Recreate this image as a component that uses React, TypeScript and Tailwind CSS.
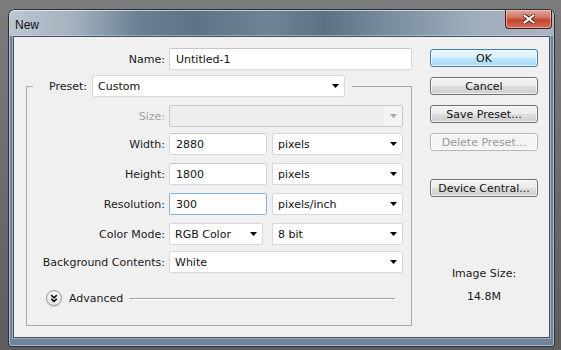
import React from "react";

function Arrow({ gray }: { gray?: boolean }) {
  return (
    <svg width="7" height="4" viewBox="0 0 7 4" className="ml-auto mr-[5px] shrink-0">
      <path d="M0 0h7L3.5 4z" fill={gray ? "#a8a8a8" : "#000"} />
    </svg>
  );
}

function Select({ className, children }: { className: string; children?: React.ReactNode }) {
  return (
    <div className={`flex h-[22px] items-center rounded-[2px] border border-[#d5d8dc] bg-white pl-[5px] text-[#111] ${className}`}>
      <span>{children}</span>
      <Arrow />
    </div>
  );
}

function Input({ className, children, focus }: { className: string; children?: React.ReactNode; focus?: boolean }) {
  return (
    <div
      className={`flex h-[22px] items-center rounded-[2px] border bg-white pl-[6px] text-[#111] ${
        focus ? "border-[#86b4e0]" : "border-[#d5d8dc] border-t-[#c3c6cb]"
      } ${className}`}
    >
      {children}
    </div>
  );
}

function Label({ children, className }: { children: React.ReactNode; className: string }) {
  return <div className={`shrink-0 pr-[4px] text-right ${className}`}>{children}</div>;
}

function Btn({ children, primary, disabled, className }: { children: React.ReactNode; primary?: boolean; disabled?: boolean; className?: string }) {
  let cls =
    "border-[#707070] bg-[linear-gradient(#f3f3f3,#ebebeb_48%,#dddddd_52%,#cfcfcf)] text-[#111]";
  if (primary)
    cls = "border-[#3c7fb1] bg-[linear-gradient(#eaf6fd,#d9f0fc_48%,#bee6fd_52%,#a7d9f5)] text-[#111]";
  if (disabled) cls = "border-[#b5b8bb] bg-[#f4f4f4] text-[#9a9a9a]";
  return (
    <div
      className={`flex h-[18px] w-[108px] items-center justify-center rounded-[3px] border shadow-[inset_0_0_0_1px_rgba(255,255,255,0.7)] ${cls} ${className ?? ""}`}
    >
      {children}
    </div>
  );
}

export default function App() {
  return (
    <div className="h-[350px] w-[561px] overflow-hidden bg-[linear-gradient(#7c7c7c,#5d5d5d)] pl-[8px] pt-[9px] font-['DejaVu_Sans',Tahoma,sans-serif] text-[11px] leading-[13px]">
      <div className="flex h-[338px] w-[547px] flex-col rounded-t-[7px] rounded-b-[3px] border border-[#2a333d] bg-[#6f8499] shadow-[inset_0_0_0_1px_rgba(220,230,240,0.55)]">
        {/* Title bar */}
        <div className="flex h-[26px] shrink-0 items-start rounded-t-[6px] bg-[linear-gradient(90deg,#bcc7d1_0%,#a3b1be_12%,#6a7f93_24%,#5e7387_34%,#6f8396_48%,#5d7185_58%,#7a8ea0_70%,#9eadba_85%,#a9b6c1_100%)] shadow-[inset_0_1px_0_rgba(255,255,255,0.6)]">
          <div className="pl-[6px] pt-[8px] font-['Liberation_Sans',Arial,sans-serif] text-[12px] leading-[14px] text-[#111]">
            New
          </div>
          <div className="ml-auto mr-[2px] flex h-[19px] w-[47px] items-center justify-center rounded-b-[4px] border border-t-0 border-[#4a1e16] bg-[linear-gradient(#e3a89c,#cf6f5c_45%,#c0432d_55%,#d4705a)] shadow-[inset_0_0_0_1px_rgba(255,220,210,0.5)]">
            <svg width="12" height="10" viewBox="0 0 12 10">
              <path d="M1.5 1.5l9 7M10.5 1.5l-9 7" stroke="#3a1510" strokeWidth="3.6" strokeLinecap="square" />
              <path d="M1.5 1.5l9 7M10.5 1.5l-9 7" stroke="#fff" strokeWidth="2" strokeLinecap="square" />
            </svg>
          </div>
        </div>

        {/* Client */}
        <div className="mx-[4px] flex h-[302px] shrink-0 border border-[#46535f] bg-[#f0f0f0] text-[#1a1a1a] shadow-[0_0_0_1px_rgba(210,222,234,0.45)]">
          {/* Left column */}
          <div className="w-[398px] shrink-0 pl-[12px] pt-[11px]">
            <div className="flex items-center">
              <Label className="w-[143px]">Name:</Label>
              <Input className="h-[21px] w-[244px] pl-[5px]">Untitled-1</Input>
            </div>

            <fieldset className="mt-[5px] h-[251px] w-[386px] border border-[#a9a9a9]">
              <legend className="ml-[6px] flex items-center pl-[16px] pr-[7px]">
                <span className="w-[39px]">Preset:</span>
                <Select className="ml-[4px] w-[253px]">Custom</Select>
              </legend>

              <div className="mt-[8px] flex items-center">
                <Label className="w-[142px] text-[#a3a3a3]">Size:</Label>
                <div className="flex h-[22px] w-[234px] items-center rounded-[2px] border border-[#c6c9cd] bg-[#eeeeee]">
                  <div className="ml-auto flex h-full w-[18px] items-center justify-center bg-[#f4f4f4]">
                    <svg width="7" height="4" viewBox="0 0 7 4">
                      <path d="M0 0h7L3.5 4z" fill="#a8a8a8" />
                    </svg>
                  </div>
                </div>
              </div>

              <div className="mt-[6px] flex items-center">
                <Label className="w-[142px]">Width:</Label>
                <Input className="w-[98px]">2880</Input>
                <Select className="ml-[5px] w-[131px]">pixels</Select>
              </div>

              <div className="mt-[8px] flex items-center">
                <Label className="w-[142px]">Height:</Label>
                <Input className="w-[98px]">1800</Input>
                <Select className="ml-[5px] w-[131px]">pixels</Select>
              </div>

              <div className="mt-[8px] flex items-center">
                <Label className="w-[142px]">Resolution:</Label>
                <Input focus className="w-[98px]">300</Input>
                <Select className="ml-[5px] w-[131px]">pixels/inch</Select>
              </div>

              <div className="mt-[8px] flex items-center">
                <Label className="w-[142px]">Color Mode:</Label>
                <Select className="w-[94px]">RGB Color</Select>
                <Select className="ml-[9px] w-[131px]">8 bit</Select>
              </div>

              <div className="mt-[6px] flex items-center">
                <Label className="w-[142px]">Background Contents:</Label>
                <Select className="w-[234px]">White</Select>
              </div>

              <div className="mt-[17px] flex items-center pl-[19px]">
                <div className="flex h-[16px] w-[16px] items-center justify-center rounded-full border border-[#9a9a9a] bg-[radial-gradient(circle_at_50%_35%,#ffffff,#e6e6e6_70%,#d2d2d2)] shadow-[0_1px_1px_rgba(0,0,0,0.15)]">
                  <svg width="8" height="9" viewBox="0 0 8 9">
                    <path d="M1.2 1.2L4 3.8 6.8 1.2M1.2 4.8L4 7.4 6.8 4.8" stroke="#111" strokeWidth="1.6" fill="none" />
                  </svg>
                </div>
                <span className="ml-[7px]">Advanced</span>
                <div className="ml-[6px] h-px w-[266px] bg-[#a0a0a0] shadow-[0_1px_0_#ffffff]" />
              </div>
            </fieldset>
          </div>

          {/* Right column */}
          <div className="ml-[18px] flex w-[108px] flex-col pt-[12px]">
            <Btn primary>OK</Btn>
            <Btn className="mt-[10px]">Cancel</Btn>
            <Btn className="mt-[10px]">Save Preset...</Btn>
            <Btn disabled className="mt-[10px]">Delete Preset...</Btn>
            <Btn className="mt-[28px]">Device Central...</Btn>
            <div className="mt-[70px] text-center">Image Size:</div>
            <div className="mt-[10px] text-center">14.8M</div>
          </div>
        </div>
      </div>
    </div>
  );
}
